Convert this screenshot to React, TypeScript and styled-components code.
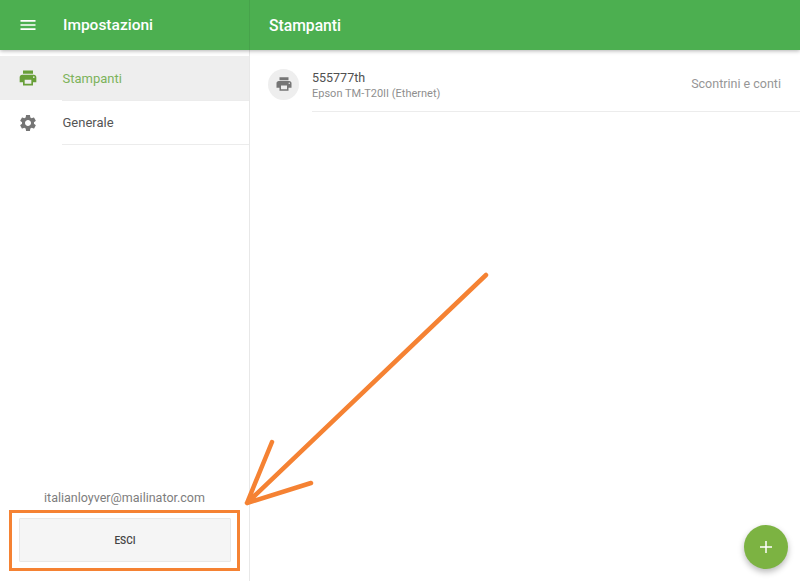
import React from "react";
import styled, { createGlobalStyle } from "styled-components";

const Global = createGlobalStyle`
  html, body { margin: 0; padding: 0; background: #fff; }
  body { font-family: Roboto, "Liberation Sans", sans-serif; }
`;
const Page = styled.div`
  position: relative;
  width: 800px;
  height: 581px;
  overflow: hidden;
  display: flex;
  flex-direction: column;
  background: #fff;
`;
const AppBar = styled.header`
  height: 50px;
  flex: none;
  display: flex;
  background: #4caf50;
  box-shadow: 0 1px 4px rgba(0, 0, 0, 0.3);
  position: relative;
  z-index: 2;
`;
const BarLeft = styled.div`
  width: 249px;
  display: flex;
  align-items: center;
  border-right: 1px solid #47a34b;
`;
const MenuSlot = styled.div`
  width: 63px;
  display: flex;
  justify-content: center;
  padding-right: 7px;
  box-sizing: border-box;
  color: #fff;
`;
const BarTitle = styled.div<{ $pad: number; $size: number }>`
  font-size: ${(p) => p.$size}px;
  font-weight: 500;
  color: #fff;
  padding-left: ${(p) => p.$pad}px;
`;
const BarRight = styled.div`
  flex: 1;
  display: flex;
  align-items: center;
`;
const Body = styled.div`
  flex: 1;
  display: flex;
  min-height: 0;
`;
const Sidebar = styled.aside`
  width: 249px;
  flex: none;
  border-right: 1px solid #e8e8e8;
  display: flex;
  flex-direction: column;
  padding-top: 6px;
`;
const NavItem = styled.div<{ $active?: boolean }>`
  height: ${(p) => (p.$active ? 44 : 43)}px;
  display: flex;
  align-items: center;
  background: ${(p) => (p.$active ? "#eeeeee" : "transparent")};
`;
const NavIcon = styled.div<{ $active?: boolean }>`
  width: 62.5px;
  display: flex;
  justify-content: center;
  padding-right: 6.5px;
  box-sizing: border-box;
  color: ${(p) => (p.$active ? "#689f38" : "#757575")};
`;
const NavLabel = styled.div<{ $active?: boolean }>`
  font-size: 13px;
  color: ${(p) => (p.$active ? "#7cb35b" : "#555555")};
`;
const NavRule = styled.div`
  height: 1px;
  margin-left: 62px;
  background: #ececec;
`;
const Spacer = styled.div`
  flex: 1;
`;
const Email = styled.div`
  text-align: center;
  font-size: 12.5px;
  color: #7d7d7d;
  line-height: 16px;
  margin-bottom: 12px;
`;
const LogoutButton = styled.button`
  display: block;
  width: 212px;
  height: 44px;
  margin: 0 18px 19px 19px;
  padding: 0;
  background: #f5f5f5;
  border: 1px solid #e8e8e8;
  border-radius: 1px;
  font-family: inherit;
  font-size: 10px;
  font-weight: 500;
  color: #444;
`;
const Main = styled.main`
  flex: 1;
  padding-top: 6px;
`;
const PrinterRow = styled.div`
  height: 56px;
  display: flex;
  align-items: center;
`;
const Avatar = styled.div`
  width: 31px;
  height: 31px;
  margin-left: 18px;
  flex: none;
  border-radius: 50%;
  background: #eeeeee;
  color: #757575;
  display: flex;
  align-items: center;
  justify-content: center;
  position: relative;
  top: 0;
`;
const RowBody = styled.div`
  flex: 1;
  align-self: stretch;
  margin-left: 13px;
  padding-right: 19px;
  display: flex;
  align-items: center;
  justify-content: space-between;
  border-bottom: 1px solid #ececec;
`;
const RowText = styled.div`
  padding-top: 3px;
`;
const PrinterName = styled.div`
  font-size: 12.5px;
  line-height: 16px;
  color: #505050;
  margin-bottom: 1px;
`;
const PrinterModel = styled.div`
  font-size: 11px;
  line-height: 14px;
  color: #8f8f8f;
`;
const Usage = styled.div`
  font-size: 12.5px;
  color: #969696;
`;
const Fab = styled.button`
  position: absolute;
  left: 744px;
  top: 525px;
  width: 44px;
  height: 44px;
  border-radius: 50%;
  border: 0;
  padding: 0;
  background: #7cb342;
  color: #fff;
  box-shadow: 0 3px 6px rgba(0, 0, 0, 0.28);
  display: flex;
  align-items: center;
  justify-content: center;
`;
const Annotation = styled.svg`
  position: absolute;
  left: 0;
  top: 0;
  z-index: 5;
  pointer-events: none;
`;

const PrinterIcon = ({ size }: { size: number }) => (
  <svg width={size} height={size} viewBox="0 0 24 24" fill="currentColor">
    <path d="M19 8H5c-1.66 0-3 1.34-3 3v6h4v4h12v-4h4v-6c0-1.66-1.34-3-3-3zm-3 11H8v-5h8v5zm3-7c-.55 0-1-.45-1-1s.45-1 1-1 1 .45 1 1-.45 1-1 1zm-1-9H6v4h12V3z" />
  </svg>
);
const GearIcon = ({ size }: { size: number }) => (
  <svg width={size} height={size} viewBox="0 0 24 24" fill="currentColor">
    <path d="M19.14 12.94c.04-.3.06-.61.06-.94 0-.32-.02-.64-.07-.94l2.03-1.58c.18-.14.23-.41.12-.61l-1.92-3.32c-.12-.22-.37-.29-.59-.22l-2.39.96c-.5-.38-1.03-.7-1.62-.94l-.36-2.54c-.04-.24-.24-.41-.48-.41h-3.84c-.24 0-.43.17-.47.41l-.36 2.54c-.59.24-1.13.57-1.62.94l-2.39-.96c-.22-.08-.47 0-.59.22L2.74 8.87c-.12.21-.08.47.12.61l2.03 1.58c-.05.3-.09.63-.09.94s.02.64.07.94l-2.03 1.58c-.18.14-.23.41-.12.61l1.92 3.32c.12.22.37.29.59.22l2.39-.96c.5.38 1.03.7 1.62.94l.36 2.54c.05.24.24.41.48.41h3.84c.24 0 .44-.17.47-.41l.36-2.54c.59-.24 1.13-.56 1.62-.94l2.39.96c.22.08.47 0 .59-.22l1.92-3.32c.12-.22.07-.47-.12-.61l-2.01-1.58zM12 15.6c-1.98 0-3.6-1.62-3.6-3.6s1.62-3.6 3.6-3.6 3.6 1.62 3.6 3.6-1.62 3.6-3.6 3.6z" />
  </svg>
);
const MenuIcon = () => (
  <svg width="20" height="20" viewBox="0 0 24 24" fill="currentColor">
    <path d="M3 18h18v-2H3v2zm0-5h18v-2H3v2zm0-7v2h18V6H3z" />
  </svg>
);
const PlusIcon = () => (
  <svg width="12" height="12" viewBox="0 0 12 12" fill="none" stroke="currentColor" strokeWidth="1.5">
    <path d="M6 0v12M0 6h12" />
  </svg>
);

export default function App() {
  return (
    <Page>
      <Global />
      <AppBar>
        <BarLeft>
          <MenuSlot><MenuIcon /></MenuSlot>
          <BarTitle $pad={0} $size={15.5}>Impostazioni</BarTitle>
        </BarLeft>
        <BarRight>
          <BarTitle $pad={19} $size={15.7}>Stampanti</BarTitle>
        </BarRight>
      </AppBar>
      <Body>
        <Sidebar>
          <NavItem $active>
            <NavIcon $active><PrinterIcon size={20} /></NavIcon>
            <NavLabel $active>Stampanti</NavLabel>
          </NavItem>
          <NavRule />
          <NavItem>
            <NavIcon><GearIcon size={20} /></NavIcon>
            <NavLabel>Generale</NavLabel>
          </NavItem>
          <NavRule />
          <Spacer />
          <Email>italianloyver@mailinator.com</Email>
          <LogoutButton>ESCI</LogoutButton>
        </Sidebar>
        <Main>
          <PrinterRow>
            <Avatar><PrinterIcon size={18} /></Avatar>
            <RowBody>
              <RowText>
                <PrinterName>555777th</PrinterName>
                <PrinterModel>Epson TM-T20II (Ethernet)</PrinterModel>
              </RowText>
              <Usage>Scontrini e conti</Usage>
            </RowBody>
          </PrinterRow>
        </Main>
      </Body>
      <Fab><PlusIcon /></Fab>
      <Annotation width="800" height="581" viewBox="0 0 800 581" fill="none" stroke="#f58233">
        <rect x="10.5" y="511.5" width="228" height="58" strokeWidth="3" />
        <path d="M486 275L247 503M272 442L247 503L311 483" strokeWidth="4.5" strokeLinecap="round" strokeLinejoin="round" />
      </Annotation>
    </Page>
  );
}
